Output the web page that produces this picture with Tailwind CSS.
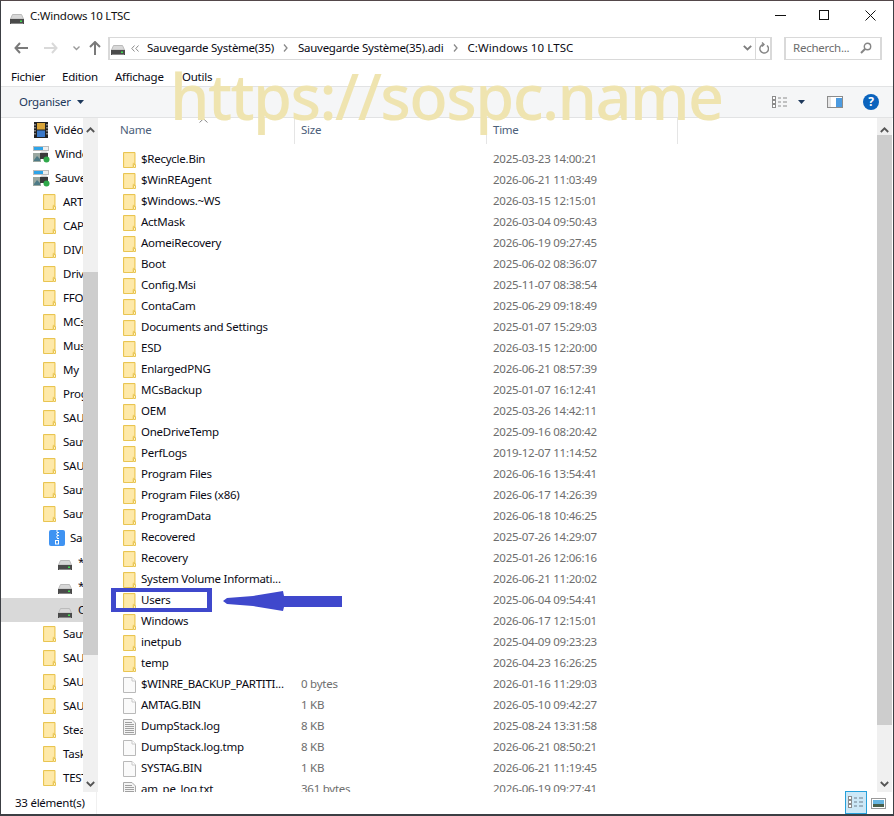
<!DOCTYPE html>
<html lang="fr">
<head>
  <meta charset="UTF-8" />
  <title>C:Windows 10 LTSC</title>
  <script src="https://cdn.jsdelivr.net/npm/@tailwindcss/browser@4"></script>
</head>
<body class="bg-white">
<svg class="hidden">
  <symbol id="folder" viewBox="0 0 13 16">
    <path d="M.5.5h11.5v11.5l-.5-.2h-1.5v3.7H.5z" fill="#fde08e" stroke="#e9c552"/>
    <path d="M1.5 1.5h9.500v9h-1.500v4.500h-8z" fill="#fee9a9"/>
    <path d="M10.500 12.500h2v3h-2z" fill="#fff2c7" stroke="#e9c552"/>
  </symbol>
  <symbol id="drive" viewBox="0 0 14 10">
    <path d="M2.500.5h9l2 4.500H.5z" fill="#d8d8d8" stroke="#bbb"/>
    <rect x="0" y="5" width="14" height="5" fill="#4a4a4a"/>
    <rect x="10" y="6.500" width="2" height="1.500" fill="#3fdc4f"/>
    <rect x="1" y="9" width="12" height="1" fill="#888"/>
  </symbol>
  <symbol id="file" viewBox="0 0 13 16">
    <path d="M.5.5h8.500l3.500 3.500v11.500H.5z" fill="#fafafa" stroke="#b9b9b9"/>
    <path d="M9 .5v3.500h3.500" fill="#fff" stroke="#c8c8c8"/>
  </symbol>
  <symbol id="log" viewBox="0 0 13 16">
    <path d="M.5.5h8.500l3.500 3.500v11.500H.5z" fill="#f4f4f4" stroke="#a9a9a9"/>
    <path d="M2 3.500h7M2 5.500h9M2 7.500h9M2 9.500h9M2 11.500h9M2 13.500h9" stroke="#a0a0a0"/>
  </symbol>
  <symbol id="winimg" viewBox="0 0 17 17">
    <rect x=".5" y=".5" width="15" height="4" fill="#eee" stroke="#bbb"/>
    <rect x="1" y="1" width="9" height="3" fill="#2ea4e8"/>
    <rect x="0" y="7" width="8" height="9" fill="#9aa7a0"/>
    <path d="M1 14l3-4 3 3v2H1z" fill="#4d7a86"/>
    <rect x="7" y="7" width="8" height="6" fill="#3a3a3a"/>
    <path d="M7 7l1.500-1.500h5L15 7z" fill="#cfcfcf"/>
    <circle cx="13.500" cy="13.500" r="3" fill="#2fa84a"/>
  </symbol>
</svg>

<div class="relative w-[894px] h-[816px] overflow-hidden flex flex-col bg-white border-t border-x border-b-2 border-t-[#54484a] border-x-[#3c3f44] border-b-[#3c3f44] text-[11.5px] tracking-[-0.25px] leading-none text-[#0a0a14] font-['Noto_Sans','Open_Sans',sans-serif]">

  <!-- title bar -->
  <div class="h-[29px] shrink-0 flex items-center pl-[9px]">
    <svg class="w-[14px] h-[10px] mt-[7px]"><use href="#drive"/></svg>
    <span class="ml-[6px] mt-[1px] text-[#111]">C:Windows 10 LTSC</span>
    <div class="ml-auto flex items-center mr-[17px]">
      <svg width="11" height="11" class="mr-[33px]"><path d="M0 5.500h11" stroke="#111"/></svg>
      <svg width="11" height="11" class="mr-[35px]"><rect x=".5" y=".5" width="9" height="9" fill="none" stroke="#111"/></svg>
      <svg width="11" height="11"><path d="M.5.500l10 10M10.500.500l-10 10" stroke="#111"/></svg>
    </div>
  </div>

  <!-- nav + address -->
  <div class="h-[34px] shrink-0 flex items-center pt-[2px] pl-[13px]">
    <svg width="14" height="12"><path d="M6 1L1.500 6 6 11M2 6h12" fill="none" stroke="#7a7a7a" stroke-width="2"/></svg>
    <svg width="14" height="12" class="ml-[16px]"><path d="M8 1l4.500 5L8 11M12 6H0" fill="none" stroke="#d9d9d9" stroke-width="2"/></svg>
    <svg width="7" height="5" class="ml-[15px]"><path d="M.5.500L3.500 3.500 6.500.500" fill="none" stroke="#9a9a9a" stroke-width="1.400"/></svg>
    <svg width="12" height="14" class="ml-[9px]"><path d="M1 6l5-5 5 5M6 1.500V14" fill="none" stroke="#7a7a7a" stroke-width="2"/></svg>
    <div class="ml-[7px] w-[664px] h-[23px] border-2 border-[#d9d9d9] border-y-[1.500px] flex items-center">
      <svg class="w-[14px] h-[10px] ml-[1px] mt-[3px]"><use href="#drive"/></svg>
      <svg width="8" height="7" class="ml-[6px]"><path d="M3.500.5L.8 3.500 3.500 6.500M7.500.5L4.800 3.500 7.500 6.500" fill="none" stroke="#8a8a8a"/></svg>
      <span class="ml-[8px]">Sauvegarde Système(35)</span>
      <svg width="5" height="8" class="ml-[9px]"><path d="M1 .5L4 4 1 7.500" fill="none" stroke="#8a8a8a" stroke-width="1.300"/></svg>
      <span class="ml-[10px]">Sauvegarde Système(35).adi</span>
      <svg width="5" height="8" class="ml-[10px]"><path d="M1 .5L4 4 1 7.500" fill="none" stroke="#8a8a8a" stroke-width="1.300"/></svg>
      <span class="ml-[9px] tracking-[0.1px]">C:Windows 10 LTSC</span>
      <svg width="9" height="6" class="ml-auto mr-[3px]"><path d="M.8.800L4.500 4.500 8.200.800" fill="none" stroke="#7d7d7d" stroke-width="1.800"/></svg>
      <div class="w-[15px] h-full border-l border-[#d9d9d9] flex items-center justify-center">
        <svg width="11" height="12"><path d="M9 3.500A4.300 4.300 0 1 1 5.500 2.500M4 .5L6 2.500 4 4.500" fill="none" stroke="#858585" stroke-width="1.400"/></svg>
      </div>
    </div>
    <div class="ml-[12px] w-[98px] h-[23px] border-2 border-[#d9d9d9] border-y-[1.500px] flex items-center pl-[7px]">
      <span class="text-[#6d6d6d]">Recherch...</span>
      <svg width="12" height="12" class="ml-auto mr-[8px]"><circle cx="7.500" cy="4.500" r="3.200" fill="none" stroke="#858585" stroke-width="1.400"/><path d="M5 7l-4 4" stroke="#858585" stroke-width="2"/></svg>
    </div>
  </div>

  <!-- menu -->
  <div class="h-[22px] shrink-0 flex items-center pl-[10px] pt-[3px] relative z-20">
    <span class="w-[51px]">Fichier</span>
    <span class="w-[53px]">Edition</span>
    <span class="w-[67px]">Affichage</span>
    <span>Outils</span>
  </div>

  <!-- toolbar -->
  <div class="h-[32px] shrink-0 flex items-center bg-[#f5f6f7] border-y border-[#e2e3e4] pl-[18px]">
    <span class="text-[#1e395b]">Organiser</span>
    <svg width="7" height="4" class="ml-[6px]"><path d="M0 0h7L3.500 4z" fill="#1e395b"/></svg>
    <div class="ml-auto flex items-center mr-[14px]">
      <svg width="16" height="13"><g fill="#fff" stroke="#8c8c8c"><rect x=".5" y=".5" width="3" height="3"/><rect x=".5" y="4.500" width="3" height="3"/><rect x=".5" y="8.500" width="3" height="3"/></g><path d="M6 2h3M11 2h4M6 6h3M11 6h4M6 10h3M11 10h4" stroke="#8c8c8c"/></svg>
      <svg width="7" height="4" class="ml-[10px]"><path d="M0 0h7L3.500 4z" fill="#1e395b"/></svg>
      <svg width="16" height="12" class="ml-[22px]"><rect x=".5" y=".5" width="15" height="11" fill="#fff" stroke="#8c8c8c"/><rect x="1" y="1" width="3" height="10" fill="#e6e6e6"/><rect x="9" y="2" width="6" height="9" fill="#4d9be0"/></svg>
      <div class="ml-[20px] w-[16px] h-[16px] rounded-full bg-[#0b63bd] text-white font-bold text-[12px] flex items-center justify-center">?</div>
    </div>
  </div>

  <!-- main -->
  <div class="flex-1 flex min-h-0">
    <!-- tree -->
    <div class="w-[82px] shrink-0 overflow-hidden" id="tree"></div>
    <div class="w-[15px] shrink-0 bg-[#f0f0f0] flex flex-col items-center">
      <svg width="9" height="6" class="mt-[9px]"><path d="M.8 5L4.500 1.300 8.200 5" fill="none" stroke="#555" stroke-width="1.800"/></svg>
      <div class="w-full h-[383px] mt-[139px] bg-[#cdcdcd]"></div>
      <svg width="9" height="6" class="mt-auto mb-[5px]"><path d="M.8 1L4.500 4.700 8.200 1" fill="none" stroke="#555" stroke-width="1.800"/></svg>
    </div>
    <!-- list -->
    <div class="flex-1 min-w-0 ml-[3px] relative overflow-hidden flex flex-col">
      <div class="h-[26px] shrink-0 flex text-[#4c607a] relative">
        <div class="w-[194px] pl-[19px] pt-[6px] border-r border-[#e5e5e5] relative">Name
          <svg width="9" height="5" class="absolute left-[98px] top-[0px]"><path d="M.5 4.500L4.500.8 8.500 4.500" fill="none" stroke="#8a8a8a"/></svg>
        </div>
        <div class="w-[192px] pl-[6px] pt-[6px] border-r border-[#e5e5e5]">Size</div>
        <div class="w-[191px] pl-[6px] pt-[6px] border-r border-[#e5e5e5]">Time</div>
      </div>
      <div class="flex-1 overflow-hidden pt-[5px]" id="rows"></div>
    </div>
    <div class="w-[15px] shrink-0 bg-[#f0f0f0] flex flex-col items-center">
      <svg width="9" height="6" class="mt-[9px]"><path d="M.8 5L4.500 1.300 8.200 5" fill="none" stroke="#555" stroke-width="1.800"/></svg>
      <div class="w-full h-[590px] mt-[2px] bg-[#cdcdcd]"></div>
      <svg width="9" height="6" class="mt-auto mb-[5px]"><path d="M.8 1L4.500 4.700 8.200 1" fill="none" stroke="#555" stroke-width="1.800"/></svg>
    </div>
    <div class="w-[1px] shrink-0"></div>
  </div>

  <!-- status bar -->
  <div class="h-[22px] shrink-0 flex items-center pl-[14px] relative">
    <span class="w-[82px] h-full flex items-center border-r border-[#f0f0f0]">33 élément(s)</span>
    <div class="ml-auto mr-[7px] flex items-center">
      <div class="w-[22px] h-[23px] -mt-[1px] bg-[#cce8f7] border border-[#26a0da] flex items-center justify-center">
        <svg width="16" height="13"><g fill="#fff" stroke="#8c8c8c"><rect x=".5" y=".5" width="3" height="3"/><rect x=".5" y="4.500" width="3" height="3"/><rect x=".5" y="8.500" width="3" height="3"/></g><path d="M6 2h3M11 2h4M6 6h3M11 6h4M6 10h3M11 10h4" stroke="#6f7f8c"/></svg>
      </div>
      <svg width="15" height="11" class="ml-[4px]"><rect x=".5" y=".5" width="14" height="10" fill="#fff" stroke="#9a9a9a"/><rect x="2" y="2" width="11" height="4" fill="#66b5e0"/><rect x="2" y="6" width="11" height="3" fill="#49604c"/></svg>
    </div>
  </div>

  <!-- pasted-on watermark and annotation -->
  <div class="absolute left-[169px] top-[56px] text-[#efe4b0] text-[63px] font-medium leading-[78px] whitespace-nowrap tracking-[-1.6px] z-10 pointer-events-none">https://sospc.name</div>
  <div class="absolute left-[110px] top-[587px] w-[101px] h-[24px] border-[#3f48cc] border-y-4 border-x-[5px]"></div>
  <svg class="absolute left-[222px] top-[588px]" width="120" height="24"><path d="M0 12L4 9 30 7 60 2 61 7H119V18H61L60 22 30 17 4 15Z" fill="#3f48cc"/></svg>
</div>

<script>
  const tree = [
    ['film', 'Vidéo'], ['win', 'Windows'], ['win', 'Sauvegarde'],
    ['f', 'ARTICLES'], ['f', 'CAPTURES'], ['f', 'DIVERS'], ['f', 'Drivers'], ['f', 'FFOutput'], ['f', 'MCs'], ['f', 'Musique'], ['f', 'My'], ['f', 'Programmes'],
    ['f', 'SAUV'], ['f', 'Sauvegarde'], ['f', 'SAUV'], ['f', 'Sauvegarde'], ['f', 'Sauvegarde'],
    ['zip', 'Sauvegarde'], ['d', '*'], ['d', '*'], ['sel', 'C:'],
    ['f', 'Sauvegarde'], ['f', 'SAUV'], ['f', 'SAUV'], ['f', 'SAUV'], ['f', 'Steam'], ['f', 'Tasks'], ['f', 'TEST']
  ];
  const icons = {
    film: '<svg width="14" height="16" class="ml-[33px] shrink-0"><rect width="14" height="16" fill="#222"/><rect x="3" y="1" width="8" height="6.500" fill="#d9a53a"/><rect x="3" y="8.500" width="8" height="6.500" fill="#3a78c8"/><path d="M1 2v12M13 2v12" stroke="#ddd" stroke-dasharray="1.500 1.500"/></svg>',
    win: '<svg width="17" height="17" class="ml-[32px] shrink-0"><use href="#winimg"/></svg>',
    f: '<svg width="13" height="16" class="ml-[42px] shrink-0"><use href="#folder"/></svg>',
    zip: '<svg width="16" height="16" class="ml-[48px] shrink-0"><rect width="16" height="16" rx="2" fill="#3f93f2"/><path d="M7 1h2M8 2.500h2M7 4h2M8 5.500h2M7 7h2M8 8.500h2" stroke="#fff"/><rect x="6.500" y="10.500" width="3" height="3.500" fill="none" stroke="#fff"/></svg>',
    d: '<svg width="14" height="10" class="ml-[57px] mt-[5px] shrink-0"><use href="#drive"/></svg>'
  };
  const textGap = { film: 'ml-[6px]', win: 'ml-[5px]', f: 'ml-[7px]', zip: 'ml-[5px]', d: 'ml-[6px]' };
  document.getElementById('tree').innerHTML = tree.map(([k, t]) => {
    const key = k === 'sel' ? 'd' : k;
    return `<div class="h-[24px] flex items-center whitespace-nowrap overflow-hidden ${k === 'sel' ? 'bg-[#d9d9d9]' : ''}">${icons[key]}<span class="${textGap[key]}">${t}</span></div>`;
  }).join('');

  const rows = [
    ['folder', '$Recycle.Bin', '', '2025-03-23 14:00:21'],
    ['folder', '$WinREAgent', '', '2026-06-21 11:03:49'],
    ['folder', '$Windows.~WS', '', '2026-03-15 12:15:01'],
    ['folder', 'ActMask', '', '2026-03-04 09:50:43'],
    ['folder', 'AomeiRecovery', '', '2026-06-19 09:27:45'],
    ['folder', 'Boot', '', '2025-06-02 08:36:07'],
    ['folder', 'Config.Msi', '', '2025-11-07 08:38:54'],
    ['folder', 'ContaCam', '', '2025-06-29 09:18:49'],
    ['folder', 'Documents and Settings', '', '2025-01-07 15:29:03'],
    ['folder', 'ESD', '', '2026-03-15 12:20:00'],
    ['folder', 'EnlargedPNG', '', '2026-06-21 08:57:39'],
    ['folder', 'MCsBackup', '', '2025-01-07 16:12:41'],
    ['folder', 'OEM', '', '2025-03-26 14:42:11'],
    ['folder', 'OneDriveTemp', '', '2025-09-16 08:20:42'],
    ['folder', 'PerfLogs', '', '2019-12-07 11:14:52'],
    ['folder', 'Program Files', '', '2026-06-16 13:54:41'],
    ['folder', 'Program Files (x86)', '', '2026-06-17 14:26:39'],
    ['folder', 'ProgramData', '', '2026-06-18 10:46:25'],
    ['folder', 'Recovered', '', '2025-07-26 14:29:07'],
    ['folder', 'Recovery', '', '2025-01-26 12:06:16'],
    ['folder', 'System Volume Informati...', '', '2026-06-21 11:20:02'],
    ['folder', 'Users', '', '2025-06-04 09:54:41'],
    ['folder', 'Windows', '', '2026-06-17 12:15:01'],
    ['folder', 'inetpub', '', '2025-04-09 09:23:23'],
    ['folder', 'temp', '', '2026-04-23 16:26:25'],
    ['file', '$WINRE_BACKUP_PARTITI...', '0 bytes', '2026-01-16 11:29:03'],
    ['file', 'AMTAG.BIN', '1 KB', '2026-05-10 09:42:27'],
    ['log', 'DumpStack.log', '8 KB', '2025-08-24 13:31:58'],
    ['file', 'DumpStack.log.tmp', '8 KB', '2026-06-21 08:50:21'],
    ['file', 'SYSTAG.BIN', '1 KB', '2026-06-21 11:19:45'],
    ['log', 'am_pe_log.txt', '361 bytes', '2026-06-19 09:27:41']
  ];
  document.getElementById('rows').innerHTML = rows.map(([icon, name, size, time]) => `
    <div class="h-[21px] flex items-center whitespace-nowrap">
      <svg width="13" height="16" class="ml-[22px] shrink-0"><use href="#${icon}"/></svg>
      <span class="ml-[5px] -mt-[1px] w-[160px] shrink-0">${name}</span>
      <span class="w-[192px] -mt-[1px] shrink-0 text-[#6d6d6d]">${size}</span>
      <span class="-mt-[1px] text-[#6d6d6d]">${time}</span>
    </div>`).join('');
</script>
</body>
</html>
